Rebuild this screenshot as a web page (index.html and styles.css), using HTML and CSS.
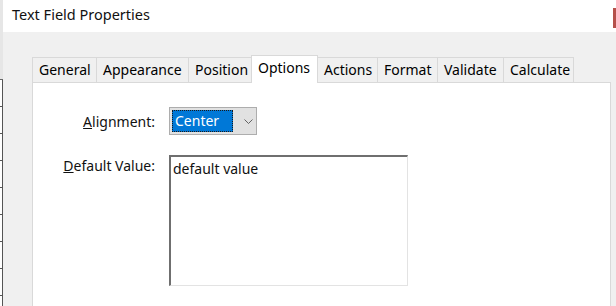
FILE: index.html
```html
<!DOCTYPE html>
<html lang="en">
<head>
    <meta charset="UTF-8">
    <meta name="viewport" content="width=device-width, initial-scale=1.0">
    <title>Text Field Properties</title>
    <link rel="stylesheet" href="styles.css">
</head>
<body>
    <div class="behind">
        <div class="behind-top"></div>
        <div class="behind-ruler"></div>
    </div>
    <div class="dialog">
        <div class="titlebar">
            <span class="title">Text Field Properties</span>
            <span class="close-edge"></span>
        </div>
        <div class="content">
            <div class="tabs">
                <div class="tab">General</div>
                <div class="tab">Appearance</div>
                <div class="tab">Position</div>
                <div class="tab active">Options</div>
                <div class="tab">Actions</div>
                <div class="tab">Format</div>
                <div class="tab">Validate</div>
                <div class="tab">Calculate</div>
            </div>
            <div class="panel">
                <div class="form">
                    <label class="label label-mid"><u>A</u>lignment:</label>
                    <div class="select">
                        <span class="select-value">Center</span>
                        <svg class="chevron" width="9" height="5" viewBox="0 0 9 5">
                            <path d="M0.5 0.5 L4.5 4.5 L8.5 0.5" fill="none" stroke="#555" stroke-width="0.9"/>
                        </svg>
                    </div>

                    <label class="label label-top"><u>D</u>efault Value:</label>
                    <div class="textbox">default value</div>
                </div>
            </div>
        </div>
    </div>
</body>
</html>
```

FILE: styles.css
```css
* {
    box-sizing: border-box;
}
body {
    margin: 0;
    width: 616px;
    height: 306px;
    overflow: hidden;
    display: flex;
    font-family: "Noto Sans", "Open Sans", sans-serif;
    font-size: 14px;
    color: #000;
    background-color: #fff;
}
.behind {
    width: 3px;
    display: flex;
    flex-direction: column;
}
.behind-top {
    height: 80px;
    background-color: #e6e6e6;
    border-bottom: 1px solid #666;
}
.behind-ruler {
    flex: 1;
    border-right: 1px solid #555;
    background: repeating-linear-gradient(#fff 0, #fff 26px, #555 26px, #555 27px);
}
.dialog {
    flex: 1;
    display: flex;
    flex-direction: column;
}
.titlebar {
    height: 32px;
    background-color: #fff;
    display: flex;
    justify-content: space-between;
    align-items: flex-start;
    padding-left: 9px;
}
.title {
    font-size: 14.5px;
    margin-top: 4px;
    color: #111;
}
.close-edge {
    width: 3px;
    height: 20px;
    margin-top: 8px;
    background-color: #b5504a;
}
.content {
    flex: 1;
    background-color: #f0f0f0;
    padding: 23px 5px 0 29px;
    display: flex;
    flex-direction: column;
}
.tabs {
    display: flex;
    align-items: flex-end;
    height: 27px;
    position: relative;
    z-index: 1;
}
.tab {
    height: 25px;
    padding: 0 6px;
    border: 1px solid #d9d9d9;
    border-bottom: none;
    margin-right: -1px;
    background-color: #f0f0f0;
    line-height: 24px;
    color: #000;
}
.tab:nth-child(1) { width: 65px; }
.tab:nth-child(2) { width: 93px; }
.tab:nth-child(3) { width: 64px; }
.tab:nth-child(4) { width: 67px; }
.tab:nth-child(5) { width: 61px; }
.tab:nth-child(6) { width: 61px; }
.tab:nth-child(7) { width: 67px; }
.tab:nth-child(8) { width: 71px; }
.tab.active {
    height: 28px;
    margin-bottom: -1px;
    background-color: #fff;
    line-height: 24px;
}
.panel {
    flex: 1;
    background-color: #fff;
    border: 1px solid #d9d9d9;
    border-bottom: none;
    padding-top: 24px;
}
.form {
    display: grid;
    grid-template-columns: 122px auto;
    column-gap: 14px;
    row-gap: 20px;
    justify-content: start;
}
.label {
    text-align: right;
    color: #111;
}
.label-mid {
    align-self: center;
}
.label-top {
    padding-top: 1px;
}
.select {
    width: 88px;
    height: 28px;
    border: 1px solid #adadad;
    background-color: #e1e1e1;
    display: flex;
    align-items: center;
    padding: 2px;
}
.select-value {
    width: 61px;
    height: 22px;
    background-color: #0078d7;
    color: #fff;
    border: 1px dotted #1a1a1a;
    padding-left: 2px;
    line-height: 19px;
}
.chevron {
    margin-left: 11px;
}
.textbox {
    width: 239px;
    height: 131px;
    border-top: 2px solid #6f6f6f;
    border-left: 2px solid #6f6f6f;
    border-right: 1px solid #e3e3e3;
    border-bottom: 1px solid #e3e3e3;
    padding: 2px 2px;
    color: #111;
    line-height: 19px;
}
```
